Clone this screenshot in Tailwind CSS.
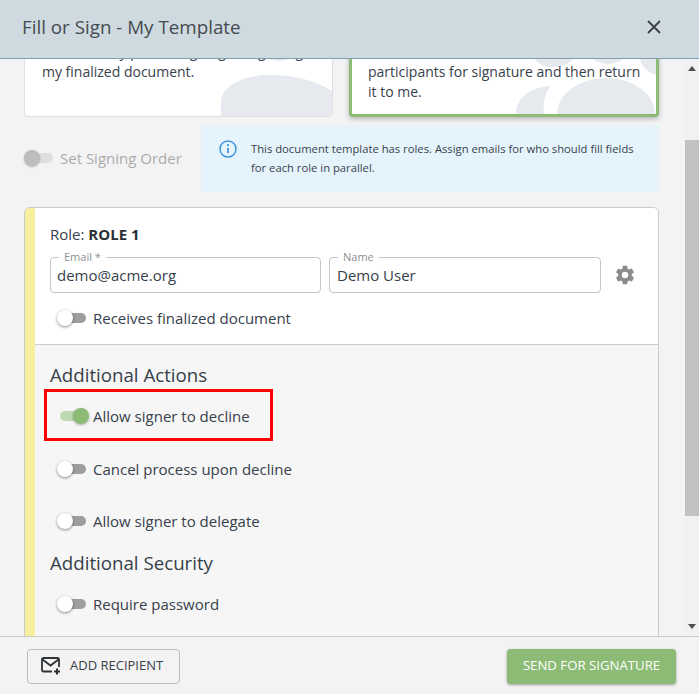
<!DOCTYPE html>
<html lang="en">
<head>
  <meta charset="UTF-8" />
  <title>Fill or Sign - My Template</title>
  <script src="https://cdn.jsdelivr.net/npm/@tailwindcss/browser@4"></script>
</head>
<body class="w-[699px] h-[694px] overflow-hidden flex flex-col bg-[#f3f3f3] font-['Open_Sans',sans-serif] text-[#37414b]">

  <!-- Dialog header -->
  <header class="h-[59px] shrink-0 flex items-center justify-between pl-[22px] pr-[38px] pb-[4px] bg-[#cfdae0] border-b border-[#7f9fb5] relative z-10">
    <h1 class="text-[18.8px] text-[#444b50]">Fill or Sign - My Template</h1>
    <svg class="w-[14px] h-[14px]" viewBox="0 0 14 14" fill="none" stroke="#3a3f44" stroke-width="1.8"><path d="M1 1l12 12M13 1L1 13"/></svg>
  </header>

  <div class="h-[577px] flex overflow-hidden">
    <main class="w-[685px] shrink-0 pl-[24px] pr-[26px] overflow-hidden">

      <!-- Option cards, scrolled partly out of view -->
      <div class="-mt-[92px] flex gap-[16px] h-[150px]">
        <div class="relative w-[309px] h-full bg-white border border-[#e0e0e0] rounded-[4px] overflow-hidden pt-[74px] pl-[17px] text-[14px] leading-[20px]">
          <svg class="absolute right-0 bottom-0" width="111" height="62" viewBox="0 0 111 62">
            <path d="M0 62V48C0 32 22 21 50 21C72 21 96 27 111 37V62Z" fill="#e6eaee"/>
            <ellipse cx="58" cy="0" rx="14" ry="7" fill="#e6eaee"/>
          </svg>
          <p class="relative">I am the only person signing and getting<br />my finalized document.</p>
        </div>
        <div class="relative w-[310px] h-full bg-white border-[3px] border-[#8bbb74] rounded-[4px] overflow-hidden pt-[72px] pl-[16px] text-[14px] leading-[20px] shadow-[0_2px_5px_rgba(0,0,0,0.25)]">
          <svg class="absolute left-0 bottom-0" width="304" height="60" viewBox="0 0 304 60">
            <ellipse cx="254" cy="60" rx="49" ry="36" fill="#e6eaee"/>
            <path d="M199 32C180 33 164 42 164 60H192C191 50 192 40 199 32Z" fill="#e6eaee"/>
            <path d="M180 0C183 10 195 15 205 13C212 12 218 10 224 0Z" fill="#e6eaee"/>
            <ellipse cx="256" cy="0" rx="17" ry="10" fill="#e6eaee"/>
            <path d="M287 0C288 12 296 19 304 21V0Z" fill="#e6eaee"/>
          </svg>
          <p class="relative">Fill out and send the document to all other<br />participants for signature and then return<br />it to me.</p>
        </div>
      </div>

      <!-- Signing order and roles notice -->
      <div class="mt-[8px] flex h-[67px]">
        <div class="w-[177px] flex items-center gap-[7px] pb-[1px]">
          <span class="relative w-[29px] h-[16px] shrink-0 flex items-center">
            <span class="ml-[2px] w-[27px] h-[10px] rounded-full bg-[#dedede]"></span>
            <span class="absolute left-0 top-0 w-[16px] h-[16px] rounded-full bg-[#bdbdbd] shadow-[0_1px_2px_rgba(0,0,0,0.25)]"></span>
          </span>
          <span class="text-[15px] text-[#a9acae] whitespace-nowrap">Set Signing Order</span>
        </div>
        <div class="flex-1 flex bg-[#e5f4fc] pl-[18px] pt-[15px] text-[11.25px] leading-[19px]">
          <svg class="w-[18px] h-[18px] shrink-0 mr-[14px]" viewBox="0 0 18 18" fill="none">
            <circle cx="9" cy="9" r="8" stroke="#3d94dc" stroke-width="1.5"/>
            <path d="M9 8v5" stroke="#3d94dc" stroke-width="1.8"/>
            <circle cx="9" cy="5.2" r="1.1" fill="#3d94dc"/>
          </svg>
          <p class="-mt-[1px] w-[395px]">This document template has roles. Assign emails for who should fill fields for each role in parallel.</p>
        </div>
      </div>

      <!-- Role card -->
      <section class="mt-[15px] h-[520px] flex border border-[#cccccc] rounded-[6px] overflow-hidden">
        <div class="w-[10px] shrink-0 bg-[#f6ef9e]"></div>
        <div class="flex-1 flex flex-col">
          <div class="h-[137px] shrink-0 bg-white border-b border-[#cccccc] px-[15px] pt-[16px]">
            <p class="text-[15px] leading-[21px]">Role: <b class="font-bold text-[#2b2f33]">ROLE 1</b></p>
            <div class="mt-[12px] flex items-center gap-[8px]">
              <div class="relative w-[271px] h-[36px] border border-[#c4c4c4] rounded-[4px] pl-[6px] pt-[7px] text-[15px] leading-[20px]">
                <span class="absolute -top-[8px] left-[8px] bg-white px-[5px] text-[11px] leading-[14px] text-[#8a8f93]">Email *</span>
                demo@acme.org
              </div>
              <div class="relative w-[272px] h-[36px] border border-[#c4c4c4] rounded-[4px] pl-[7px] pt-[7px] text-[15px] leading-[20px]">
                <span class="absolute -top-[8px] left-[8px] bg-white px-[5px] text-[11px] leading-[14px] text-[#8a8f93]">Name</span>
                Demo User
              </div>
              <svg class="ml-[5px] -mt-[1px] w-[22px] h-[22px] shrink-0" viewBox="0 0 24 24" fill="#8c8c8c"><path d="M19.4 13c.04-.33.06-.66.06-1s-.02-.67-.06-1l2.1-1.65c.19-.15.24-.42.12-.64l-2-3.46c-.12-.22-.38-.3-.61-.22l-2.49 1c-.52-.4-1.08-.73-1.69-.98l-.38-2.65A.49.49 0 0 0 14 2h-4c-.25 0-.46.18-.49.42l-.38 2.65c-.61.25-1.17.59-1.69.98l-2.49-1c-.23-.09-.49 0-.61.22l-2 3.46c-.13.22-.07.49.12.64L4.56 11c-.04.33-.07.67-.07 1s.03.67.07 1l-2.1 1.65c-.19.15-.25.42-.12.64l2 3.46c.12.22.38.3.61.22l2.49-1c.52.4 1.08.73 1.69.98l.38 2.65c.03.24.24.42.49.42h4c.25 0 .46-.18.49-.42l.38-2.65c.61-.25 1.17-.59 1.69-.98l2.49 1c.23.09.49 0 .61-.22l2-3.46c.12-.22.07-.49-.12-.64L19.4 13zM12 15.5a3.5 3.5 0 1 1 0-7 3.5 3.5 0 0 1 0 7z"/></svg>
            </div>
            <div class="mt-[15px] ml-[7px] flex items-center gap-[7px] h-[20px]">
              <span class="relative w-[29px] h-[16px] shrink-0 flex items-center">
                <span class="ml-[4px] w-[25px] h-[10px] rounded-full bg-[#9e9e9e]"></span>
                <span class="absolute left-0 top-0 w-[16px] h-[16px] rounded-full bg-white shadow-[0_1px_3px_rgba(0,0,0,0.45)]"></span>
              </span>
              <span class="text-[15px]">Receives finalized document</span>
            </div>
          </div>

          <div class="flex-1 bg-[#f6f6f6] px-[15px]">
            <h2 class="mt-[17px] text-[18.7px] leading-[26px]">Additional Actions</h2>

            <div class="relative mt-[18px] ml-[10px] flex items-center gap-[4px] h-[20px]">
              <span class="absolute -left-[16px] -top-[17px] w-[229px] h-[52px] border-[3px] border-[#ff0000]"></span>
              <span class="relative w-[29px] h-[16px] shrink-0 flex items-center">
                <span class="w-[24px] h-[10px] rounded-full bg-[#c0d9b3]"></span>
                <span class="absolute right-0 top-0 w-[16px] h-[16px] rounded-full bg-[#8bbb74] shadow-[0_1px_3px_rgba(0,0,0,0.3)]"></span>
              </span>
              <span class="text-[15px]">Allow signer to decline</span>
            </div>

            <div class="mt-[33px] ml-[7px] flex items-center gap-[7px] h-[20px]">
              <span class="relative w-[29px] h-[16px] shrink-0 flex items-center">
                <span class="ml-[4px] w-[25px] h-[10px] rounded-full bg-[#9e9e9e]"></span>
                <span class="absolute left-0 top-0 w-[16px] h-[16px] rounded-full bg-white shadow-[0_1px_3px_rgba(0,0,0,0.45)]"></span>
              </span>
              <span class="text-[15px]">Cancel process upon decline</span>
            </div>

            <div class="mt-[32px] ml-[7px] flex items-center gap-[7px] h-[20px]">
              <span class="relative w-[29px] h-[16px] shrink-0 flex items-center">
                <span class="ml-[4px] w-[25px] h-[10px] rounded-full bg-[#9e9e9e]"></span>
                <span class="absolute left-0 top-0 w-[16px] h-[16px] rounded-full bg-white shadow-[0_1px_3px_rgba(0,0,0,0.45)]"></span>
              </span>
              <span class="text-[15px]">Allow signer to delegate</span>
            </div>

            <h2 class="mt-[19px] text-[18.7px] leading-[26px]">Additional Security</h2>

            <div class="mt-[18px] ml-[7px] flex items-center gap-[7px] h-[20px]">
              <span class="relative w-[29px] h-[16px] shrink-0 flex items-center">
                <span class="ml-[4px] w-[25px] h-[10px] rounded-full bg-[#9e9e9e]"></span>
                <span class="absolute left-0 top-0 w-[16px] h-[16px] rounded-full bg-white shadow-[0_1px_3px_rgba(0,0,0,0.45)]"></span>
              </span>
              <span class="text-[15px]">Require password</span>
            </div>
          </div>
        </div>
      </section>
    </main>

    <!-- Scrollbar -->
    <div class="w-[14px] shrink-0 flex flex-col items-center bg-[#f1f1f1]">
      <svg class="mt-[7px] shrink-0" width="8" height="5" viewBox="0 0 8 5" fill="#505050"><path d="M4 0l4 5H0z"/></svg>
      <div class="mt-[69px] w-full h-[376px] bg-[#c1c1c1]"></div>
      <svg class="mt-[108px] shrink-0" width="8" height="5" viewBox="0 0 8 5" fill="#505050"><path d="M0 0h8L4 5z"/></svg>
    </div>
  </div>

  <!-- Footer actions -->
  <footer class="h-[58px] shrink-0 flex items-center justify-between pl-[27px] pr-[23px] pb-[1px] pt-[2px] bg-[#f3f3f3] border-t border-[#cccccc]">
    <button class="w-[153px] h-[35px] flex items-center pl-[13px] gap-[9px] border border-[#bbbbbb] rounded-[4px] text-[13px] text-[#37414b]">
      <svg class="w-[20px] h-[18px] shrink-0" viewBox="0 0 20 18" fill="none" stroke="#2f3336" stroke-width="1.8">
        <path d="M11 14.5H2.5a1.5 1.5 0 0 1-1.5-1.5V2.5A1.5 1.5 0 0 1 2.5 1h14A1.5 1.5 0 0 1 18 2.5V10"/>
        <path d="M1.5 2.5l8 6 8-6"/>
        <path d="M16 11.5v6M13 14.5h6" stroke-width="2"/>
      </svg>
      ADD RECIPIENT
    </button>
    <button class="w-[169px] h-[35px] bg-[#8bbb74] text-white text-[13.2px] rounded-[4px] shadow-[0_1px_3px_rgba(0,0,0,0.35)]">SEND FOR SIGNATURE</button>
  </footer>

</body>
</html>
